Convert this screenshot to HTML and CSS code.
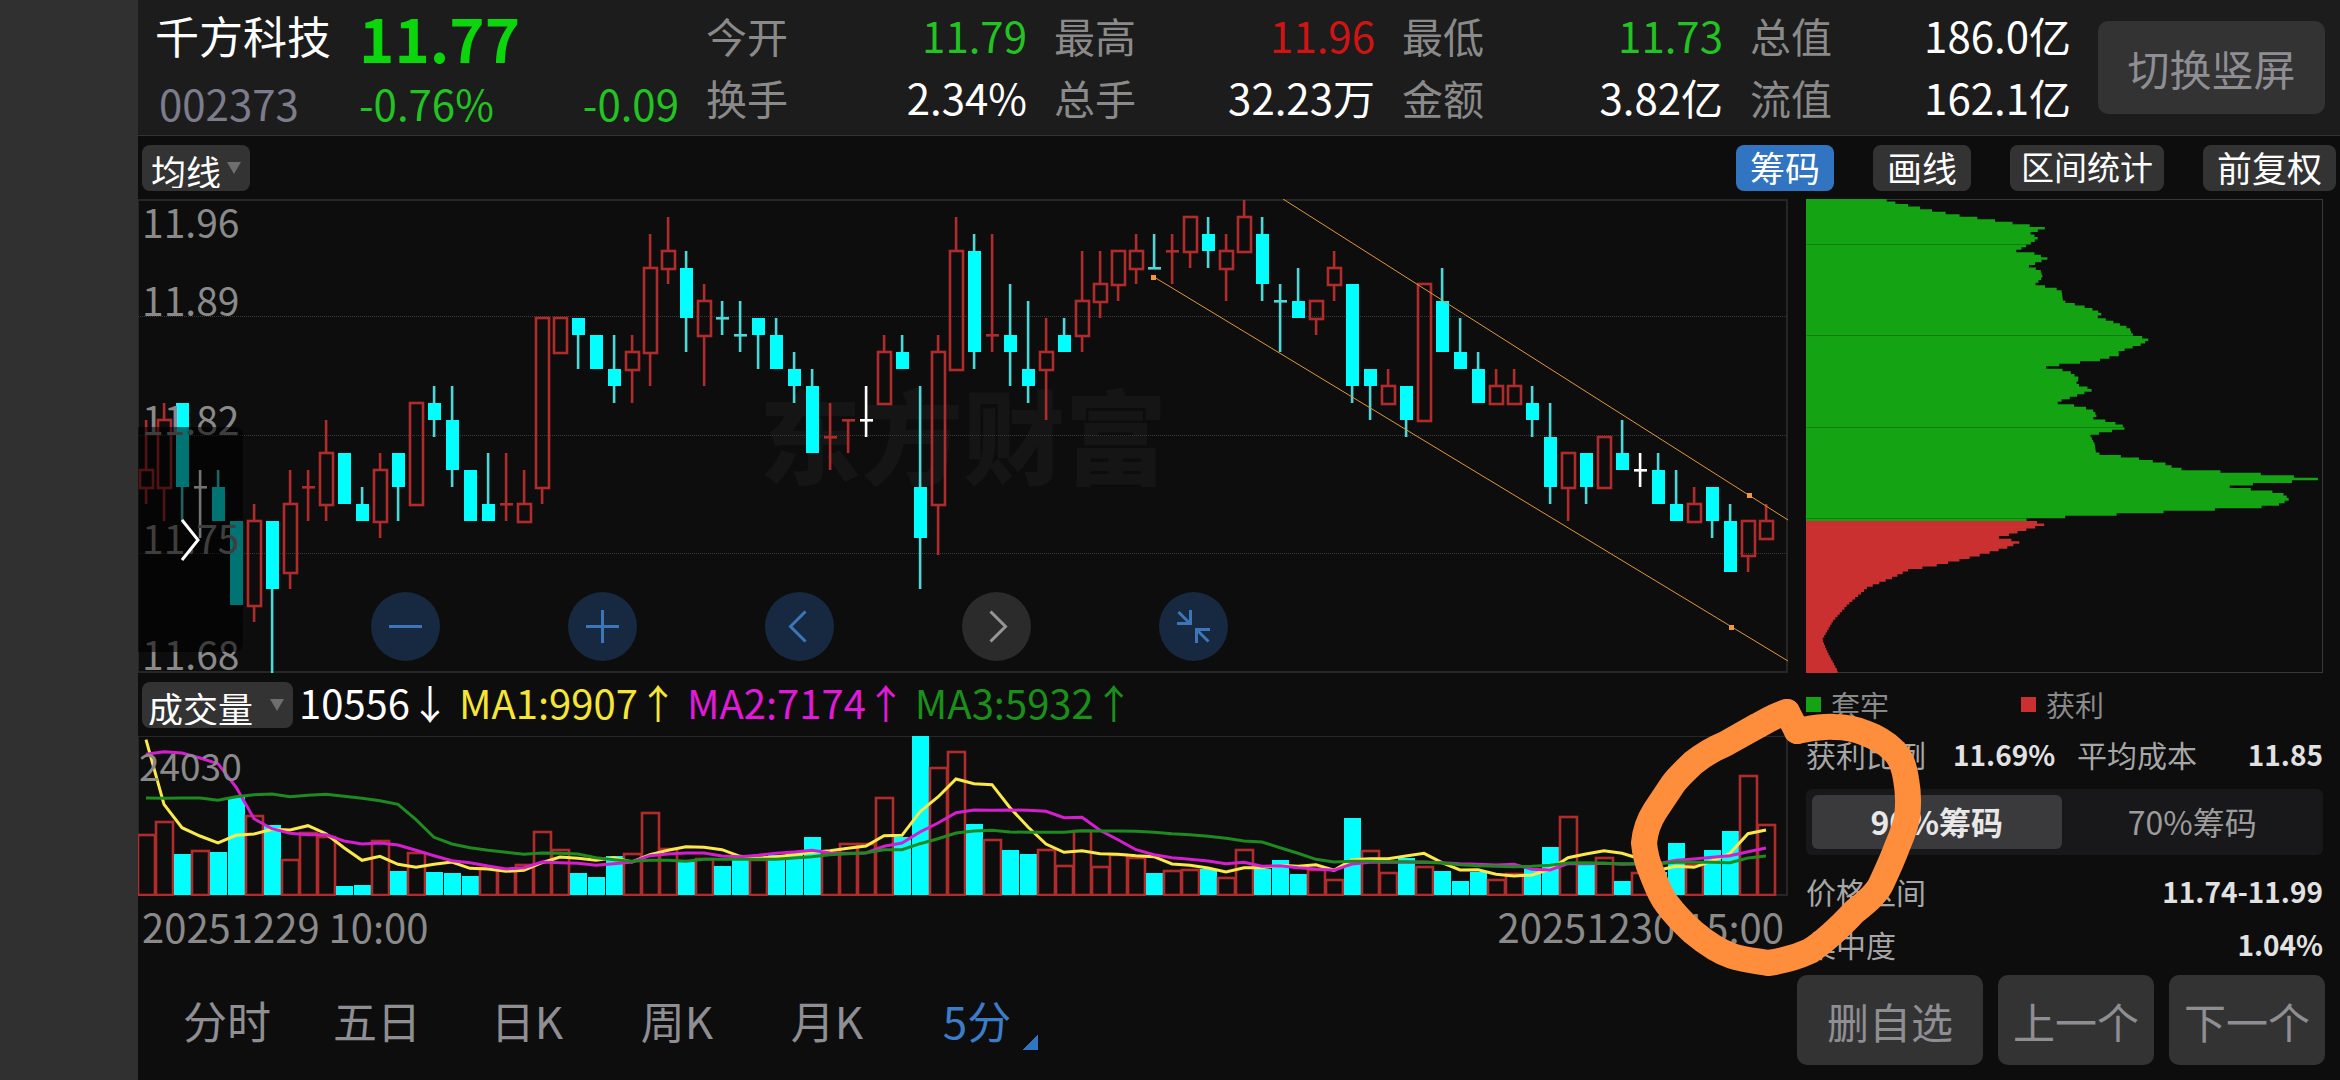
FILE: index.html
```html
<!DOCTYPE html>
<html lang="zh-CN">
<head>
<meta charset="utf-8">
<meta name="viewport" content="width=device-width, initial-scale=1">
<title>千方科技 002373</title>
<link rel="stylesheet" href="styles.css">
</head>
<body>
<div class="screen">
  <div class="bezel"></div>
  <div class="app">
    <header class="quote">
      <div class="summary">
        <div class="summary-row summary-top">
          <h1 class="name">千方科技</h1>
          <span class="price">11.77</span>
        </div>
        <div class="summary-row summary-bottom">
          <span class="code">002373</span>
          <span class="down pct">-0.76%</span>
          <span class="down change">-0.09</span>
        </div>
      </div>
      <dl class="stats">
        <div class="stat"><dt>今开</dt><dd class="down">11.79</dd></div>
        <div class="stat"><dt>最高</dt><dd class="up">11.96</dd></div>
        <div class="stat"><dt>最低</dt><dd class="down">11.73</dd></div>
        <div class="stat"><dt>总值</dt><dd>186.0亿</dd></div>
        <div class="stat"><dt>换手</dt><dd>2.34%</dd></div>
        <div class="stat"><dt>总手</dt><dd>32.23万</dd></div>
        <div class="stat"><dt>金额</dt><dd>3.82亿</dd></div>
        <div class="stat"><dt>流值</dt><dd>162.1亿</dd></div>
      </dl>
      <button class="btn rotate" type="button">切换竖屏</button>
    </header>

    <div class="toolbar">
      <span class="picker picker-ma"><select aria-label="主图指标"><option>均线</option></select></span>
      <div class="tools">
        <button class="tool tool-on" type="button">筹码</button>
        <button class="tool" type="button">画线</button>
        <button class="tool tool-long" type="button">区间统计</button>
        <button class="tool" type="button">前复权</button>
      </div>
    </div>

    <main class="board">
      <section class="charts">
        <div class="kline">
          <div class="watermark" aria-hidden="true">东方财富</div>
          <svg id="kline" class="plot" viewBox="0 0 1650 474" preserveAspectRatio="none" aria-label="5分钟K线"></svg>
          <span class="axis axis-1">11.96</span>
          <span class="axis axis-2">11.89</span>
          <span class="axis axis-3">11.82</span>
          <span class="axis axis-4">11.75</span>
          <span class="axis axis-5">11.68</span>
          <button class="drawer" type="button" aria-label="展开列表">
            <svg width="24" height="44" viewBox="0 0 24 44"><path d="M4 2 20 22 4 42" fill="none" stroke="#fff" stroke-width="3"/></svg>
          </button>
          <div class="controls">
            <button class="round" type="button" aria-label="缩小"><svg viewBox="0 0 69 69"><path d="M18 34.500H51"/></svg></button>
            <button class="round" type="button" aria-label="放大"><svg viewBox="0 0 69 69"><path d="M18 34.500H51M34.500 18V51"/></svg></button>
            <button class="round" type="button" aria-label="左移"><svg viewBox="0 0 69 69"><path d="M40.500 19.500 25.500 34.500 40.500 49.500"/></svg></button>
            <button class="round round-off" type="button" aria-label="右移"><svg viewBox="0 0 69 69"><path d="M28.500 19.500 43.500 34.500 28.500 49.500"/></svg></button>
            <button class="round" type="button" aria-label="收起"><svg viewBox="0 0 69 69"><path d="M19.500 20 31 31.500M18 31.500H31.500V18M49.500 49.500 38 38M51 37.500H37.500V51"/></svg></button>
          </div>
        </div>
        <div class="volume-head">
          <span class="picker picker-vol"><select aria-label="副图指标"><option>成交量</option></select></span>
          <div class="readout">
            <span>10556↓</span>
            <span class="ma1">MA1:9907↑</span>
            <span class="ma2">MA2:7174↑</span>
            <span class="ma3">MA3:5932↑</span>
          </div>
        </div>
        <div class="volume">
          <svg id="volume" class="plot" viewBox="0 0 1650 160" preserveAspectRatio="none" aria-label="成交量"></svg>
          <span class="axis axis-vol">24030</span>
        </div>
        <div class="dates"><time>20251229 10:00</time><time>20251230 15:00</time></div>
      </section>

      <aside class="chips">
        <svg id="chips" class="chip-plot" viewBox="0 0 517 474" preserveAspectRatio="none" aria-label="筹码分布"></svg>
        <div class="legend">
          <span class="key key-loss">套牢</span>
          <span class="key key-gain">获利</span>
        </div>
        <div class="chip-pair">
          <span>获利比例</span><b>11.69%</b>
          <span>平均成本</span><b class="end">11.85</b>
        </div>
        <div class="segment">
          <button class="seg seg-on" type="button" aria-pressed="true">90%筹码</button>
          <button class="seg" type="button" aria-pressed="false">70%筹码</button>
        </div>
        <div class="chip-row"><span>价格区间</span><b>11.74-11.99</b></div>
        <div class="chip-row"><span>集中度</span><b>1.04%</b></div>
      </aside>
    </main>

    <footer class="bottom">
      <nav class="periods">
        <button class="period" type="button">分时</button>
        <button class="period" type="button">五日</button>
        <button class="period" type="button">日K</button>
        <button class="period" type="button">周K</button>
        <button class="period" type="button">月K</button>
        <button class="period period-on" type="button">5分</button>
      </nav>
      <div class="actions">
        <button class="btn action-wide" type="button">删自选</button>
        <button class="btn" type="button">上一个</button>
        <button class="btn" type="button">下一个</button>
      </div>
    </footer>

    <svg class="mark" viewBox="1625 690 300 295" aria-hidden="true">
      <path d="M1787 712C1778 714 1768 720 1757 726L1725 744C1713 749 1703 755 1693 763C1684 772 1679 776 1673 784L1655 811C1648 822 1645 832 1644 843C1645 853 1647 862 1651 871C1656 883 1659 894 1667 904C1676 916 1683 923 1693 932C1705 942 1717 951 1732 956C1744 960 1757 961 1768 963C1783 961 1797 957 1810 951C1827 940 1840 927 1854 912C1865 903 1877 894 1882 882C1888 869 1893 858 1897 847C1902 835 1906 826 1907 817C1909 803 1908 790 1906 779C1904 766 1901 757 1893 750C1885 742 1876 737 1865 733C1855 729 1846 727 1835 727C1821 726 1809 729 1797 731"/>
      <path d="M1787 712 1797 731"/>
    </svg>
  </div>
</div>
<script src="charts.js"></script>
</body>
</html>
```
FILE: styles.css
```css
* { box-sizing: border-box; }

body {
  margin: 0;
  background: #0d0d0d;
  color: #fff;
  font-family: "Noto Sans CJK SC", "Noto Sans", sans-serif;
}

button, select {
  font: inherit;
  color: inherit;
  border: 0;
  padding: 0;
  background: none;
}

h1, dl, dd { margin: 0; font-weight: 400; }

.screen { display: flex; min-height: 100vh; }
.bezel { flex: 0 0 138px; background: #303030; }
.app { position: relative; flex: 1; min-width: 0; }

/* quote header */
.quote {
  display: flex;
  align-items: center;
  gap: 27px;
  height: 136px;
  padding: 0 15px 0 17px;
  background: #1c1c1c;
  border-bottom: 1px solid #333;
}
.summary { flex: 0 0 524px; padding-top: 4px; }
.summary-row { display: flex; align-items: center; height: 66px; }
.summary-top { gap: 28px; }
.name { font-size: 44px; line-height: 64px; padding-bottom: 4px; }
.price { color: #0bd50b; font-size: 60px; font-weight: 700; line-height: 66px; }
.summary-bottom { font-size: 42px; line-height: 62px; padding-left: 4px; }
.code { color: #7c7c8c; width: 200px; }
.change { margin-left: auto; }
.down { color: #22c322; }
.up { color: #d01414; }

.stats {
  flex: 1;
  display: grid;
  grid-template-columns: repeat(4, 1fr);
  column-gap: 27px;
  padding-bottom: 4px;
  font-size: 42px;
  line-height: 62px;
}
.stat { display: flex; justify-content: space-between; align-items: center; white-space: nowrap; }
.stat dt { color: #8a8a8a; font-size: 41px; }

.btn {
  min-width: 156px;
  height: 90px;
  border-radius: 10px;
  background: #333;
  color: #8e8e93;
  font-size: 42px;
}
.rotate { flex: 0 0 227px; height: 93px; }

/* toolbar */
.toolbar {
  display: flex;
  justify-content: space-between;
  align-items: center;
  height: 63px;
  padding: 0 4px;
}
.picker { position: relative; display: block; height: 46px; font-size: 35px; }
.picker select {
  display: block;
  appearance: none;
  width: 100%;
  height: 46px;
  padding-bottom: 3px;
  border-radius: 8px;
  background: #333;
}
.picker::after {
  content: "";
  position: absolute;
  right: 9px;
  top: 17px;
  border: solid transparent;
  border-width: 12px 7px 0;
  border-top-color: #6e6e6e;
}
.picker-ma { width: 108px; }
.picker-ma select { padding-left: 9px; }
.picker-vol { width: 151px; }
.picker-vol select { padding-left: 6px; }

.tools { display: flex; gap: 39px; }
.tool {
  height: 46px;
  padding: 0 14px 3px;
  border-radius: 8px;
  background: #333;
  font-size: 35px;
  line-height: 43px;
}
.tool-long { padding: 0 11px 3px; font-size: 33px; }
.tool-on { background: #3074c2; }

/* charts */
.board {
  display: grid;
  grid-template-columns: minmax(0, 1fr) 517px;
  column-gap: 18px;
  padding-right: 17px;
}
.plot { position: relative; display: block; width: 100%; height: 100%; }
.kline { position: relative; height: 474px; }
.watermark {
  position: absolute;
  inset: 0;
  display: flex;
  align-items: center;
  justify-content: center;
  padding-bottom: 8px;
  color: #151515;
  font-size: 102px;
  font-weight: 900;
}
.axis {
  position: absolute;
  left: 4px;
  color: #8a8a8a;
  font-size: 39px;
  line-height: 40px;
}
.axis-1 { top: 2px; }
.axis-2 { top: 80px; }
.axis-3 { top: 199px; }
.axis-4 { top: 318px; }
.axis-5 { top: 434px; }
.axis-vol { left: 1px; top: 9px; font-size: 37px; }

.drawer {
  position: absolute;
  left: 0;
  top: 228px;
  width: 105px;
  height: 225px;
  padding-right: 2px;
  border-radius: 0 8px 8px 0;
  background: rgba(0, 0, 0, 0.55);
}
.drawer svg { display: block; margin: 0 auto; }

.controls { position: absolute; left: 233px; bottom: 12px; display: flex; gap: 128px; }
.round {
  width: 69px;
  height: 69px;
  border-radius: 50%;
  background: #172940;
  color: #3c76b8;
}
.round-off { background: #2b2b2b; color: #969696; }
.round svg { display: block; fill: none; stroke: currentColor; stroke-width: 3; }

.volume-head {
  display: flex;
  align-items: center;
  gap: 6px;
  height: 63px;
  padding: 0 4px;
}
.readout {
  display: flex;
  gap: 9px;
  padding-bottom: 5px;
  font-size: 40px;
  white-space: nowrap;
}
.ma1 { color: #f5e636; }
.ma2 { color: #e01ad8; }
.ma3 { color: #1a8f1a; }
.volume { position: relative; height: 160px; }
.dates {
  display: flex;
  justify-content: space-between;
  padding: 0 4px;
  color: #8a8a8a;
  font-size: 40px;
  line-height: 60px;
}

/* chip distribution */
.chip-plot { display: block; width: 100%; height: 474px; }
.legend {
  display: grid;
  grid-template-columns: 215px 1fr;
  height: 62px;
  color: #8a8a8a;
  font-size: 29px;
  line-height: 60px;
}
.key { display: flex; align-items: center; gap: 10px; }
.key::before { content: ""; width: 15px; height: 15px; background: #13a313; }
.key-gain::before { background: #cb3030; }
.chip-row, .chip-pair {
  align-items: center;
  color: #a6a6a6;
  font-size: 30px;
}
.chip-row { display: flex; justify-content: space-between; height: 53px; }
.chip-pair {
  display: grid;
  grid-template-columns: 147px 124px 120px 1fr;
  height: 38px;
  line-height: 36px;
}
.chips b { color: #e2e2e2; font-size: 28px; font-weight: 700; }
.end { text-align: right; }
.segment {
  display: grid;
  grid-template-columns: 1fr 1fr;
  gap: 6px;
  height: 66px;
  margin: 16px 0 9px;
  padding: 6px;
  border-radius: 6px;
  background: #18181a;
}
.seg { border-radius: 6px; color: #9c9c9c; font-size: 32px; line-height: 52px; padding-bottom: 2px; }
.seg-on { background: #3a3a3c; color: #e8e8e8; font-weight: 700; }

/* bottom bar */
.bottom {
  display: flex;
  justify-content: space-between;
  align-items: center;
  padding: 5px 15px 15px 14px;
}
.periods { display: flex; color: #8e8e93; font-size: 44px; }
.period { position: relative; width: 150px; line-height: 64px; }
.period-on { color: #3c7cc8; }
.period-on::after {
  content: "";
  position: absolute;
  right: 14px;
  bottom: 2px;
  width: 15px;
  height: 15px;
  background: linear-gradient(135deg, transparent 50%, #3074c2 50%);
}
.actions { display: flex; gap: 15px; }
.action-wide { width: 186px; }

/* hand-drawn circle on top of everything */
.mark {
  position: absolute;
  right: 415px;
  top: 690px;
  width: 300px;
  height: 295px;
  pointer-events: none;
}
.mark path {
  fill: none;
  stroke: #ff8e3c;
  stroke-width: 26px;
  stroke-linecap: round;
  stroke-linejoin: round;
}
```
FILE: charts.js
```js
const RED = "#b02b2b", CYAN = "#00ffff", WICK = "#4fd6d6", WHITE = "#ffffff";
const STEP = 18, FIRST = 8;
const TICK = 473 / 28;

// colour, high, body top, body bottom, low, in ticks below 11.96
const candles = `R 13 16 17 18|R 12 13 17 19|C 12 12 17 19|W 16 17 17 20|C 16 17 19 19|C 19 19 24 24|R 18 19 24 25|C 19 19 23 28|R 16 18 22 23|R 16 17 17 19
R 13 15 18 19|C 15 15 18 18|C 17 18 19 19|R 15 16 19 20|C 15 15 17 19|R 12 12 18 18|C 11 12 13 14|C 11 13 16 17|C 16 16 19 19|C 15 18 19 19
R 15 18 18 19|R 16 18 19 19|R 7 7 17 18|R 7 7 9 9|C 7 7 8 10|C 8 8 10 10|C 8 10 11 12|R 8 9 10 12|R 2 4 9 11|R 1 3 4 5
C 3 4 7 9|R 5 6 8 11|C 6 7 7 8|C 6 8 8 9|C 7 7 8 10|C 7 8 10 10|C 9 10 11 12|C 10 11 15 15|R 12 14 14 16|R 13 13 13 15
W 11 13 13 14|R 8 9 12 12|C 8 9 10 10|C 11 17 20 23|R 8 9 18 21|R 1 3 10 10|C 2 3 9 10|R 2 8 8 9|C 5 8 9 11|C 6 10 11 12
R 7 9 10 13|C 7 8 9 9|R 3 6 8 9|R 3 5 6 7|R 3 3 5 6|R 2 3 4 5|C 2 4 4 4|R 2 3 3 5|R 1 1 3 4|C 1 2 3 4
R 2 3 4 6|R 0 1 3 3|C 1 2 5 6|C 5 6 6 9|C 4 6 7 7|R 6 6 7 8|R 3 4 5 6|C 5 5 11 12|C 10 10 11 13|R 10 11 12 12
C 11 11 13 14|R 5 5 13 13|C 4 6 9 9|C 7 9 10 10|C 9 10 12 12|R 10 11 12 12|R 10 11 12 12|C 11 12 13 14|C 12 14 17 18|R 15 15 17 19
C 15 15 17 18|R 14 14 17 17|C 13 15 16 16|W 15 16 16 17|C 15 16 18 18|C 16 18 19 19|R 17 18 19 19|C 17 17 19 20|C 18 19 22 22|R 19 19 21 22
R 18 19 20 20`.split(/[|\n]/).map(s => s.split(" "));

// volume bars: colour and top edge, in thirds of a pixel
const bars = `R494 R456 C550 R543 C546 C379 R438 C463 R568 R488 R501 C647 C643 R513 C603 R547 C604 C607 C616 R592 R600 R585 R484 R538 C607 C621 C558 R552 R428 R537
C575 R565 C588 C562 R568 C553 C546 C501 R548 R520 R522 R383 C500 C198 R294 R246 C460 R510 C540 C552 R540 R588 R483 R590 R555 R562 C607 R602 R598 C597
R623 R540 C597 C570 C610 R600 R628 C443 R543 R609 C562 R591 C603 C632 C606 R629 R612 C597 C530 R441 C583 R562 C632 R608 C605 C517 R585 C540 C483 R318 R464`.split(/\s+/);

const averages = [
  ["#fbe94a", [208,402,472,497,518,495,491,477,479,466,490,532,570,558,582,591,582,575,594,596,603,600,577,560,564,570,562,575,553,540,529,531,538,558,563,560,553,546,541,534,527,496,495,424,380,326,340,343,412,470,521,546,541,550,552,556,559,581,585,593,605,592,592,585,588,583,600,568,565,565,557,549,577,599,598,612,617,614,597,562,551,541,549,565,600,588,591,572,549,490,479]],
  ["#d41fcf", [252,244,248,263,280,350,445,475,489,493,493,512,521,518,524,540,556,571,577,587,596,592,575,577,579,585,580,575,556,551,548,548,557,559,555,549,545,540,548,549,548,528,518,485,458,427,419,420,419,420,423,442,441,480,508,538,553,562,567,572,580,576,588,586,592,596,600,581,576,575,576,575,577,580,582,584,582,597,599,580,580,579,582,580,580,570,566,561,556,544,533]],
  ["#1f8a1f", [383,384,383,383,390,379,373,371,379,375,372,378,384,391,402,448,501,521,532,540,546,552,548,549,551,562,568,573,570,570,573,567,567,567,567,567,563,559,553,550,547,538,538,520,505,488,482,480,485,486,486,486,481,482,482,483,486,490,493,498,504,512,515,532,549,567,575,573,573,574,574,576,578,583,586,588,589,588,585,578,577,579,580,580,580,576,576,576,577,563,557]]
];

// outline of the chip distribution: width, depth
const outline = [[265,27],[300,38],[338,46],[410,62],[482,76],[582,91],[680,106],[731,115],[708,122],[686,129],[697,136],[709,146],[688,160],[660,176],[646,183],[697,190],[736,206],[700,221],[681,228],[697,234],[716,242],[722,262],[710,274],[699,281],[727,289],[775,300],[780,333],[807,341],[835,348],[876,362],[889,373],[877,380],[919,394],[970,415],[976,433],[1025,447],[1008,462],[936,486],[948,492],[885,510],[786,523],[721,531],[758,537],[795,543],[826,565],[816,583],[867,599],[805,622],[756,638],[801,644],[831,652],[862,657],[877,676],[863,684],[921,697],[965,713],[895,728],[857,735],[870,762],[874,790],[930,797],[978,803],[1026,812],[1088,825],[1091,835],[1205,843],[1318,850],[1417,858],[1518,866],[1445,874],[1343,881],[1239,888],[1300,896],[1363,903],[1405,910],[1425,927],[1402,942],[1362,950],[1223,958],[1086,965],[947,973],[809,980],[672,988],[700,995],[730,1003],[703,1011],[653,1026],[624,1035],[596,1042],[627,1048],[656,1057],[620,1073],[570,1088],[487,1110],[419,1126],[338,1141],[290,1165],[222,1193],[165,1245],[125,1292],[93,1349],[110,1390],[137,1442],[137,1449]];

const rect = (x, y, w, h, fill) => `<rect x="${x}" y="${y}" width="${w}" height="${h}" fill="${fill}"/>`;
const box = (x, y, w, h, stroke, size = 2) => `<rect x="${x}" y="${y}" width="${w}" height="${h}" fill="none" stroke="${stroke}" stroke-width="${size}"/>`;

function drawCandles() {
  let out = box(0, 1, 1649, 472, "#262626");
  for (const k of [7, 14, 21]) {
    out += `<path d="M0 ${Math.round(k * TICK) - 0.5}H1650" stroke="#3a3a3a" stroke-dasharray="1 1"/>`;
  }
  candles.forEach(([c, ...t], i) => {
    const x = FIRST + i * STEP;
    const [hi, top, bottom, lo] = t.map(v => Math.round(v * TICK) + (v ? 1 : 0));
    const body = c === "R" ? RED : c === "C" ? CYAN : WHITE;
    const wick = c === "C" ? WICK : body;
    if (top === bottom) {
      out += rect(x - 1.2, hi, 2.6, lo - hi, wick) + rect(x - 6, top - 1, 13, 2.6, wick);
      return;
    }
    if (top > hi) out += rect(x - 1.2, hi, 2.6, top - hi, wick);
    if (lo > bottom) out += rect(x - 1.2, bottom, 2.6, lo - bottom, wick);
    out += c === "R" ? box(x - 6, top, 13, bottom - top + 1, RED, 2.6) : rect(x - 6, top, 13, bottom - top, CYAN);
  });
  out += `<g stroke="#e0963c" stroke-width="1"><path d="M1145 0 1650 321M1016 78 1650 462"/></g>`;
  for (const [x, y] of [[1016, 78], [1612, 296], [1594, 438]]) {
    const py = y === 438 ? 428 : y;
    out += rect(x - 3, py - 2, 5, 5, "#f0993a");
  }
  document.getElementById("kline").innerHTML = out;
}

function drawVolume() {
  const y = v => (v - 197) / 3;
  let out = box(0, 0, 1649, 159, "#262626");
  bars.forEach((b, i) => {
    const x = FIRST + i * STEP, top = Math.round(y(+b.slice(1)));
    out += b[0] === "R" ? box(x - 8, top, 17, 159 - top, RED, 2.6) : rect(x - 8, top, 17, 159 - top, CYAN);
  });
  for (const [color, values] of averages) {
    const points = values.map((v, i) => `${FIRST + i * STEP},${y(v).toFixed(1)}`).join(" ");
    out += `<polyline points="${points}" fill="none" stroke="${color}" stroke-width="3"/>`;
  }
  document.getElementById("volume").innerHTML = out;
}

function drawChips() {
  const rows = 187, h = 474 / rows;
  let out = `<rect x="0.5" y="0.5" width="516" height="473" fill="none" stroke="#383838"/>`;
  const path = { g: "", r: "" };
  for (let i = 0; i < rows; i++) {
    const depth = 27 + (i + 0.5) * h * 3;
    let k = 1;
    while (k < outline.length - 1 && outline[k][1] < depth) k++;
    const [x0, y0] = outline[k - 1], [x1, y1] = outline[k];
    const w = (x0 + (x1 - x0) * Math.min(1, Math.max(0, (depth - y0) / (y1 - y0))) - 47) / 2.851;
    const key = depth < 992 ? "g" : "r";
    path[key] += `M0 ${(i * h).toFixed(2)}h${w.toFixed(1)}v${h.toFixed(2)}H0z`;
  }
  out += `<path d="${path.g}" fill="#13a313"/><path d="${path.r}" fill="#cb3030"/>`;
  document.getElementById("chips").innerHTML = out;
}

drawCandles();
drawVolume();
drawChips();
```
